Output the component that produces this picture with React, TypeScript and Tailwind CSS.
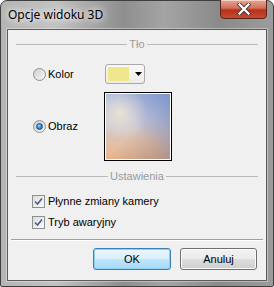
import React from 'react';

function Radio({ checked }: { checked?: boolean }) {
  return (
    <span className="flex h-[13px] w-[13px] items-center justify-center rounded-full border border-[#8e8f8f] bg-[linear-gradient(135deg,#d0d0d0,#f6f6f6)]">
      {checked && (
        <span className="h-[7px] w-[7px] rounded-full border border-[#1b4f8a] bg-[radial-gradient(circle_at_40%_35%,#9fd6ff,#2a86d8_55%,#0e4d9a)]" />
      )}
    </span>
  );
}

function Check() {
  return (
    <span className="flex h-[13px] w-[13px] items-center justify-center border border-[#8e8f8f] bg-[linear-gradient(135deg,#dcdcdc,#fbfbfb)]">
      <svg width="9" height="9" viewBox="0 0 9 9">
        <path d="M1 4.5 L3.5 7 L8 1.5" fill="none" stroke="#4a5f97" strokeWidth="1.6" />
      </svg>
    </span>
  );
}

function GroupHeader({ label }: { label: string }) {
  return (
    <div className="mx-[8px] flex h-[12px] items-center">
      <div className="h-px flex-1 bg-[#b9b9b9]" />
      <span className="px-[2px] text-[11px] leading-none text-[#9a9a9a]">{label}</span>
      <div className="h-px flex-1 bg-[#b9b9b9]" />
    </div>
  );
}

function App() {
  return (
    <div className="h-[287px] w-[274px] bg-white">
      <div
        className="flex h-[287px] w-[274px] flex-col rounded-t-[7px] rounded-b-[2px] border border-[#3e3e3e] bg-[linear-gradient(90deg,#b4b4b4_0%,#c2c2c2_20%,#8e8e8e_45%,#a4a4a4_60%,#8a8a8a_80%,#9c9c9c_100%)] px-[6px] pb-[5px]"
        style={{ fontFamily: '"Liberation Sans", Arial, sans-serif' }}
      >
        <div className="flex h-[28px] items-center justify-between">
          <span
            className="pl-[1px] text-[12px] text-black [text-shadow:0_0_6px_#ffffff,0_0_10px_#ffffff]"
            style={{ fontFamily: '"Noto Sans", sans-serif' }}
          >
            Opcje widoku 3D
          </span>
          <div className="-mt-[2px] flex h-[20px] w-[47px] items-center justify-center self-start rounded-b-[4px] border border-[#5a2418] bg-[linear-gradient(180deg,#e8a594_0%,#d0705a_45%,#b8301c_55%,#c84a30_100%)] shadow-[inset_0_1px_0_rgba(255,255,255,0.5)]">
            <svg width="14" height="12" viewBox="0 0 14 12">
              <path d="M2.5 1.5 L11.5 10.5 M11.5 1.5 L2.5 10.5" stroke="#4b3a38" strokeWidth="4" strokeLinecap="square" />
              <path d="M2.5 1.5 L11.5 10.5 M11.5 1.5 L2.5 10.5" stroke="#ffffff" strokeWidth="2.2" strokeLinecap="square" />
            </svg>
          </div>
        </div>
        <div className="border border-[#5c5c5c] shadow-[0_0_0_1px_rgba(255,255,255,0.35)]">
          <div className="flex h-[250px] w-[258px] flex-col bg-[#f0f0f0] text-[11px] text-black">
            <div className="mt-[8px]">
              <GroupHeader label="Tło" />
            </div>
            <div className="mt-[14px] flex h-[20px] items-center pl-[25px]">
              <div className="flex w-[72px] items-center gap-[2px]">
                <Radio />
                <span>Kolor</span>
              </div>
              <div className="flex h-[20px] w-[40px] items-center rounded-[3px] border border-[#a9a9a9] bg-[linear-gradient(180deg,#f8f8f8,#ececec)] pl-[2px]">
                <div className="h-[14px] w-[21px] bg-[#f0e68c]" />
                <svg className="ml-[6px]" width="7" height="4" viewBox="0 0 7 4">
                  <path d="M0 0 L7 0 L3.5 4 Z" fill="#000000" />
                </svg>
              </div>
            </div>
            <div className="mt-[8px] flex h-[69px] items-center pl-[25px]">
              <div className="flex w-[71px] items-center gap-[2px]">
                <Radio checked />
                <span>Obraz</span>
              </div>
              <div className="h-[69px] w-[68px] border border-black bg-white p-px">
                <div className="h-full w-full bg-[radial-gradient(circle_at_22%_30%,rgba(232,228,212,0.95),rgba(232,228,212,0)_40%),linear-gradient(225deg,rgba(122,148,200,0.95)_0%,rgba(140,160,205,0.5)_30%,rgba(160,170,210,0)_55%),linear-gradient(315deg,rgba(168,140,132,0.85)_0%,rgba(175,150,140,0)_50%),linear-gradient(180deg,#b2bae0_0%,#c9c6d6_45%,#e2c0a8_75%,#ebb58e_100%)]" />
              </div>
            </div>
            <div className="mt-[9px]">
              <GroupHeader label="Ustawienia" />
            </div>
            <div className="mt-[9px] flex h-[20px] items-center gap-[3px] pl-[24px]">
              <Check />
              <span>Płynne zmiany kamery</span>
            </div>
            <div className="mt-[1px] flex h-[20px] items-center gap-[3px] pl-[24px]">
              <Check />
              <span>Tryb awaryjny</span>
            </div>
            <div className="mx-[3px] mt-[7px] h-px bg-[#a0a0a0] shadow-[0_1px_0_#ffffff]" />
            <div className="mt-[8px] flex justify-end gap-[9px] pr-[9px]">
              <button className="flex h-[22px] w-[78px] items-center justify-center rounded-[3px] border border-[#3c7fb1] bg-[linear-gradient(180deg,#eaf6fd_0%,#d9f0fc_50%,#bee6fd_50%,#a7d9f5_100%)] shadow-[inset_0_0_0_1px_#8ed0f2]">
                OK
              </button>
              <button className="flex h-[22px] w-[77px] items-center justify-center rounded-[3px] border border-[#707070] bg-[linear-gradient(180deg,#f2f2f2_0%,#ebebeb_50%,#dddddd_50%,#cfcfcf_100%)] shadow-[inset_0_0_0_1px_#fcfcfc]">
                Anuluj
              </button>
            </div>
          </div>
        </div>
      </div>
    </div>
  );
}

export default App;
